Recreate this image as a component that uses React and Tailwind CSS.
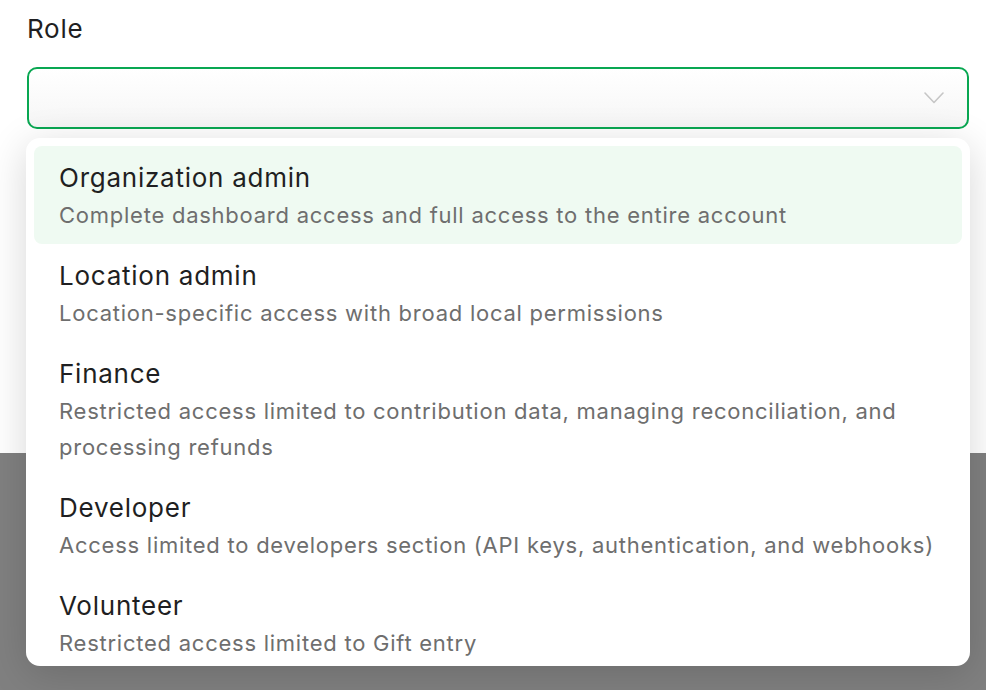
import { useState } from 'react';

const roles = [
  {
    id: 'org_admin',
    name: 'Organization admin',
    description: 'Complete dashboard access and full access to the entire account',
  },
  {
    id: 'location_admin',
    name: 'Location admin',
    description: 'Location-specific access with broad local permissions',
  },
  {
    id: 'finance',
    name: 'Finance',
    description:
      'Restricted access limited to contribution data, managing reconciliation, and processing refunds',
  },
  {
    id: 'developer',
    name: 'Developer',
    description: 'Access limited to developers section (API keys, authentication, and webhooks)',
  },
  {
    id: 'volunteer',
    name: 'Volunteer',
    description: 'Restricted access limited to Gift entry',
  },
];

function Chevron() {
  return (
    <svg width="20" height="12" viewBox="0 0 20 12" fill="none">
      <path d="M1 1l9 9.5L19 1" stroke="#c6c6c6" strokeWidth="1.6" strokeLinecap="round" strokeLinejoin="round" />
    </svg>
  );
}

export default function App() {
  const [active, setActive] = useState('org_admin');

  return (
    <div className="min-h-screen bg-[#808080] font-['Inter',sans-serif] tracking-[0.75px]">
      <div className="relative h-[453px] bg-white pl-[27px] pr-[17px] pt-[12px]">
        <label className="block text-[26px] leading-[34px] text-[#1f1f22]">Role</label>

        <button
          type="button"
          className="mt-[21px] flex h-[62px] w-full items-center justify-end rounded-[10px] border-2 border-[#09a752] bg-gradient-to-b from-white to-[#f6f6f6] pr-[23px]"
        >
          <Chevron />
        </button>

        {/* Options list */}
        <div className="absolute left-[26px] top-[138px] z-10 h-[528px] w-[944px] overflow-hidden rounded-[14px] bg-white p-[8px] shadow-[0_8px_40px_rgba(0,0,0,0.16)]">
          {roles.map((role) => (
            <div
              key={role.id}
              onMouseEnter={() => setActive(role.id)}
              className={`cursor-pointer rounded-[8px] pl-[25px] pr-[12px] pt-[13px] pb-[11px] ${
                active === role.id ? 'bg-[#effaf2]' : ''
              }`}
            >
              <div className="text-[26px] leading-[38px] text-[#1f1f22]">{role.name}</div>
              <div className="text-[22px] leading-[36px] text-[#6e6e6e]">{role.description}</div>
            </div>
          ))}
        </div>
      </div>
    </div>
  );
}
